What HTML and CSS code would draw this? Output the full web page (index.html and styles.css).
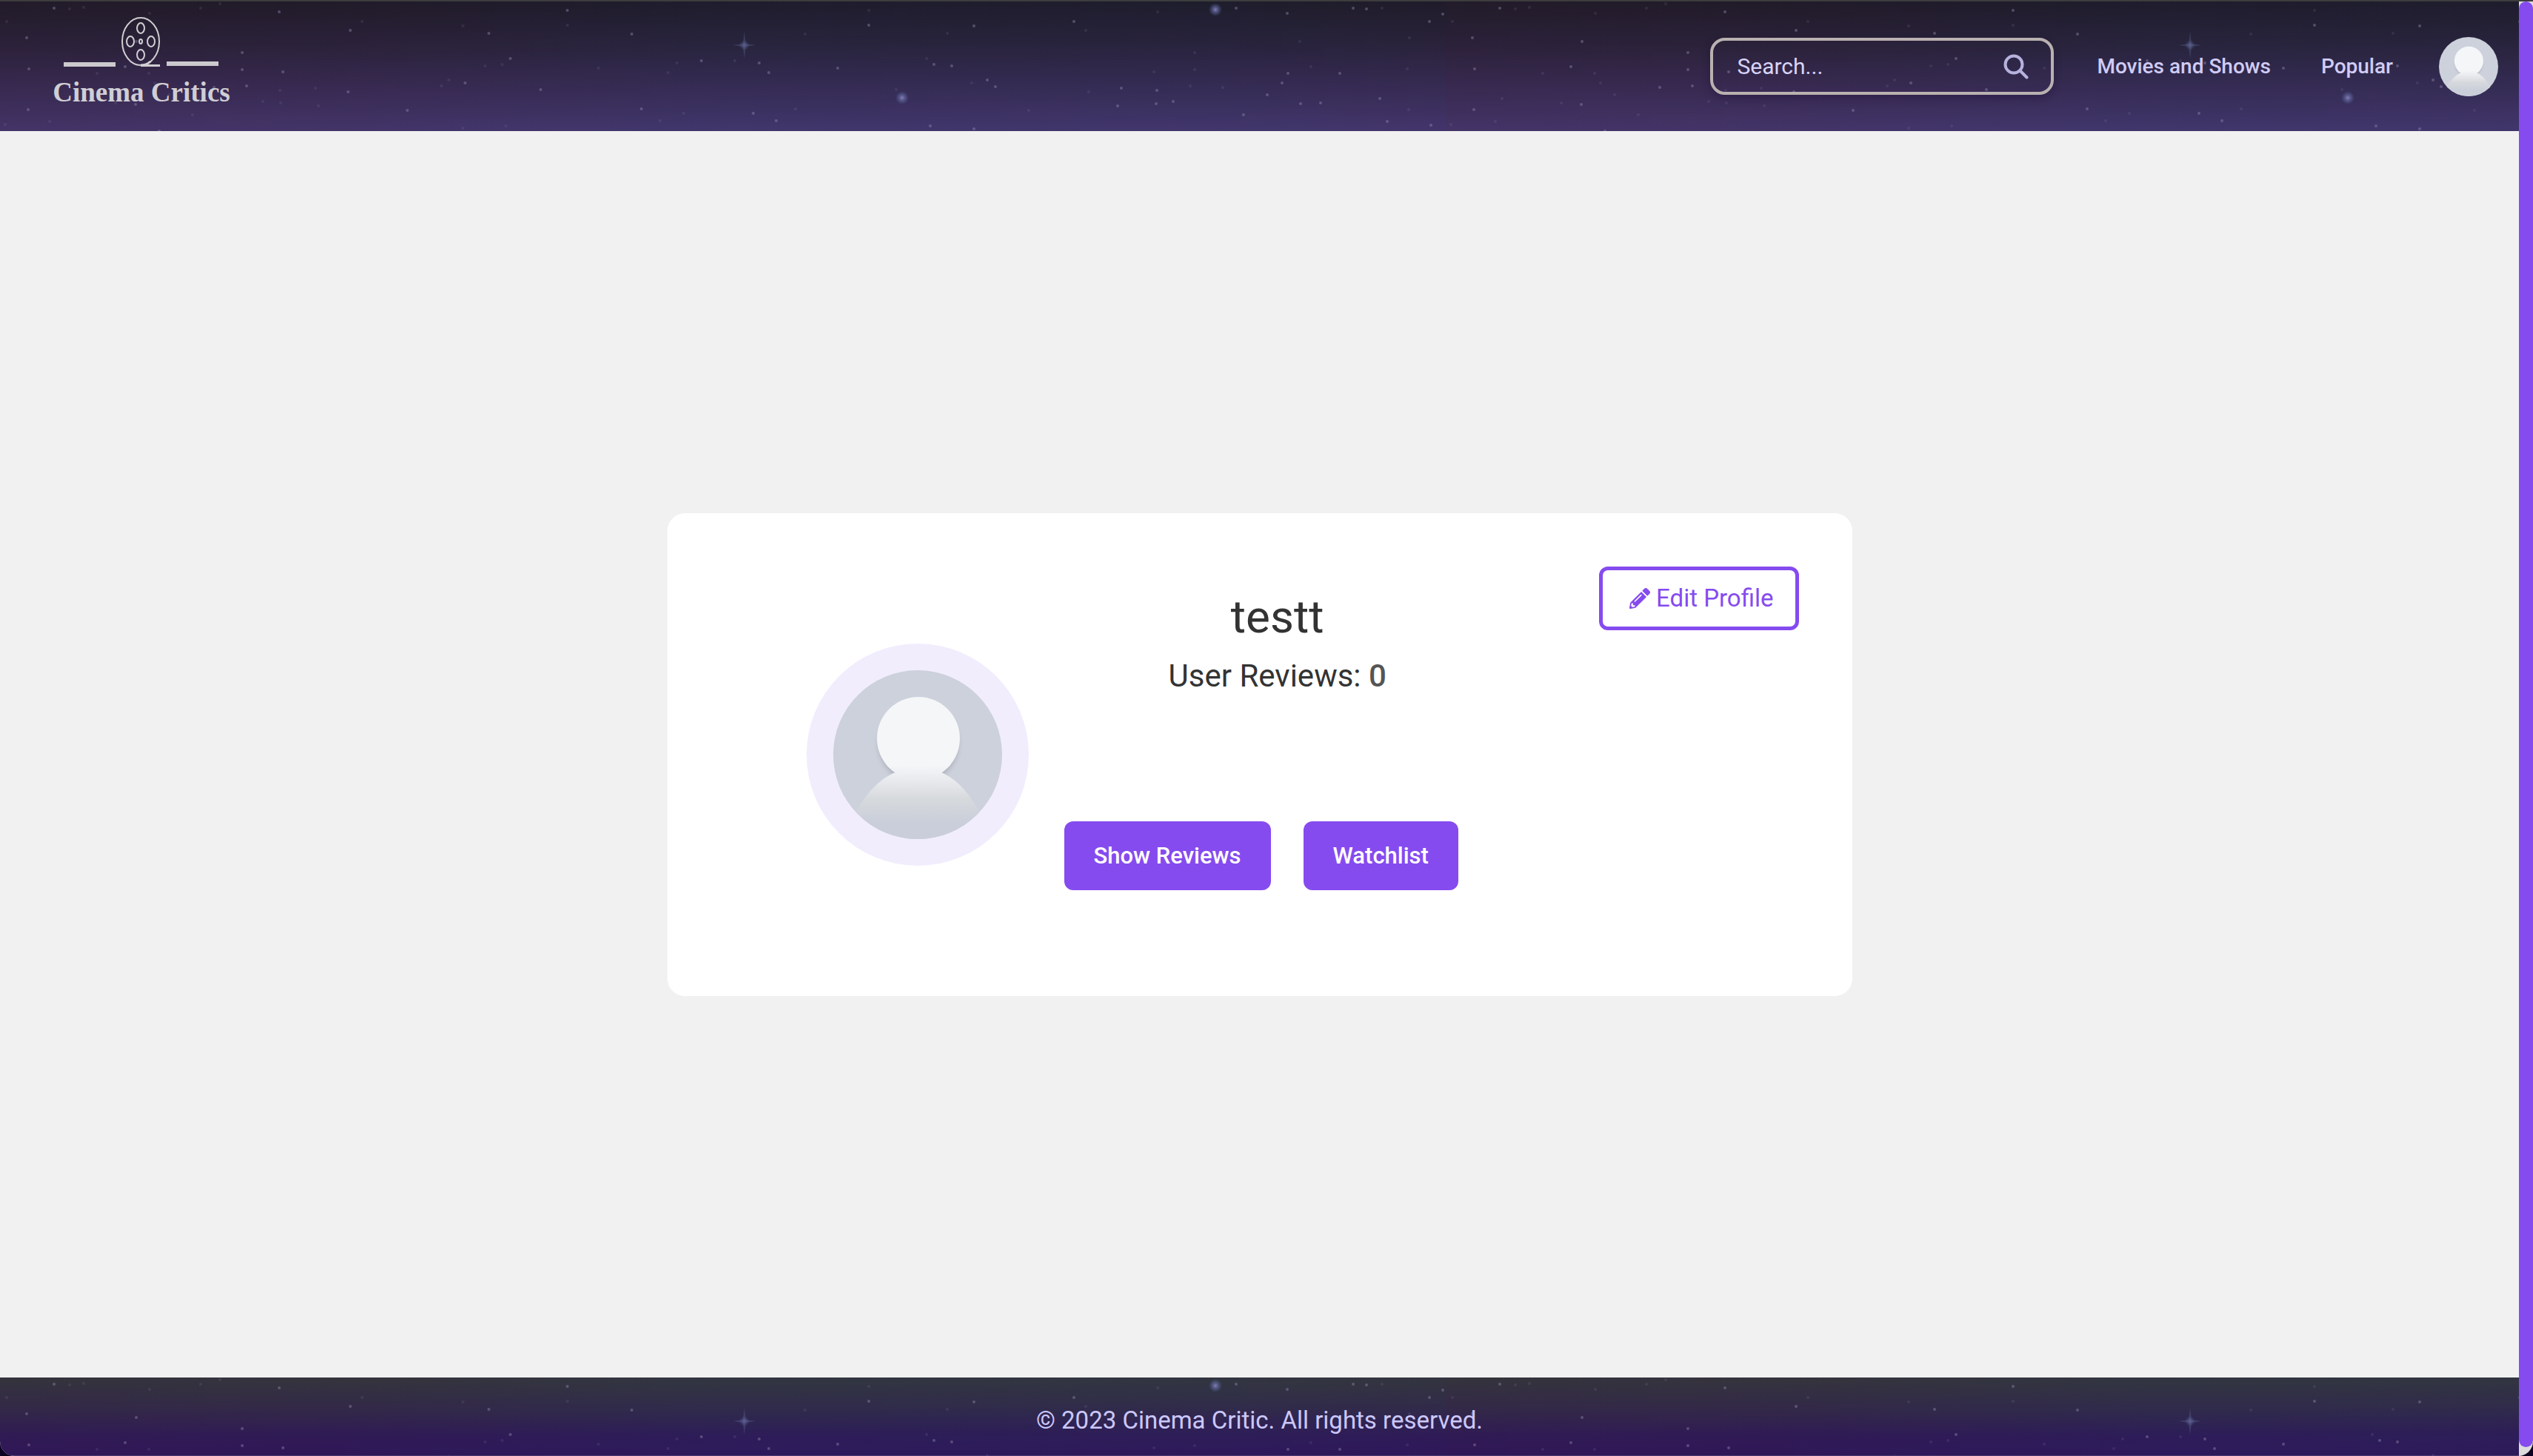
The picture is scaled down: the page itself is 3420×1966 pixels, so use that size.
FILE: index.html
```html
<!DOCTYPE html>
<html lang="en">
<head>
<meta charset="utf-8">
<title>Cinema Critics</title>
<link rel="stylesheet" href="styles.css">
</head>
<body>
<div class="window">
  <div class="page">
    <header class="header">
      <svg class="sky" aria-hidden="true">
        <defs>
          <radialGradient id="glow">
            <stop offset="0" stop-color="#8d84b4" stop-opacity=".95"/>
            <stop offset=".35" stop-color="#6d6ca8" stop-opacity=".7"/>
            <stop offset="1" stop-color="#4a6a98" stop-opacity="0"/>
          </radialGradient>
          <linearGradient id="tint">
            <stop offset="0" stop-color="#4a1828" stop-opacity=".08"/>
            <stop offset=".25" stop-color="#4a1828" stop-opacity=".06"/>
            <stop offset=".5" stop-color="#203c60" stop-opacity=".06"/>
            <stop offset=".85" stop-color="#203c60" stop-opacity=".05"/>
            <stop offset="1" stop-color="#402848" stop-opacity=".03"/>
          </linearGradient>
          <pattern id="stars" width="1952" height="1200" patternUnits="userSpaceOnUse">
            <rect width="1952" height="1200" fill="url(#tint)"/>
            <path class="star-faint" d="M94 10h0M113 8h0M297 3h0M271 9h0M9 27h0M202 16h0M489 27h0M625 33h0M766 32h0M1087 44h0M678 85h0M655 87h0M914 83h0M992 80h0M808 90h0M902 96h0M131 97h0M201 97h0M606 106h0M596 114h0M378 120h0M426 117h0M355 135h0M379 137h0M430 141h0M67 162h0M7 166h0M260 153h0M625 171h0M683 168h0M923 151h0M891 161h0M1074 145h0M1173 12h0M1279 43h0M1466 39h0M1563 14h0M1866 9h0M1903 49h0M1755 54h0M1613 69h0M1613 92h0M1558 95h0M1251 77h0M1312 110h0M1210 119h0M1389 147h0M1470 122h0M1607 114h0M1651 116h0M1770 88h0M1900 91h0M1902 146h0M209 110h0M228 126h0M156 137h0M76 131h0"/>
            <path class="star-bright" d="M73 9h0M377 14h0M766 12h0M473 39h0M660 43h0M853 44h0M36 49h0M184 54h0M327 69h0M689 77h0M947 80h0M1025 83h0M1038 96h0M1131 90h0M39 91h0M169 88h0M327 92h0M382 95h0M333 114h0M628 110h0M730 119h0M470 122h0M550 147h0M38 146h0M183 139h0M215 175h0M866 145h0M1017 151h0M1048 161h0M1173 32h0M1315 33h0M1450 27h0M1669 9h0M1738 16h0M1827 9h0M1845 10h0M1948 17h0M1930 27h0M1261 85h0M1285 87h0M1333 106h0M1344 115h0M1514 117h0M1562 120h0M1509 141h0M1561 138h0M1584 135h0M1679 153h0M1711 126h0M1731 110h0M1739 97h0M1809 97h0M1756 138h0M1783 137h0M1863 131h0M1873 162h0M1932 167h0M1256 168h0M1315 172h0M289 116h0"/>
            <circle cx="1218" cy="130" r="9" fill="url(#glow)"/>
            <circle cx="1641" cy="11" r="9" fill="url(#glow)"/>
            <circle cx="1005" cy="59" r="7" fill="url(#glow)" fill-opacity=".6"/>
            <path fill="#65709c" fill-opacity=".3" d="M1005 41l2 16 13 2-13 2-2 16-2-16-13-2 13-2z"/>
          </pattern>
        </defs>
        <rect width="100%" height="100%" fill="url(#stars)"/>
      </svg>
      <a class="logo" href="#" aria-label="Cinema Critics">
        <svg viewBox="0 0 240 137" width="240" height="137">
          <g fill="none" stroke="#d0ced2" stroke-width="2">
            <ellipse cx="119" cy="35" rx="25" ry="32"/>
            <ellipse cx="119" cy="17" rx="5" ry="7"/>
            <ellipse cx="119" cy="53" rx="5" ry="7"/>
            <ellipse cx="105" cy="35" rx="5" ry="7"/>
            <ellipse cx="133" cy="35" rx="5" ry="7"/>
            <ellipse cx="119" cy="35" rx="2" ry="3"/>
            <path d="M119 67.500h26M119 67q8 0 13-5" stroke-width="3"/>
          </g>
          <path fill="#cccacd" d="M15 63h70v6H15zM154 62h70v6h-70z"/>
          <text class="logo-text" x="120" y="116" text-anchor="middle">Cinema Critics</text>
        </svg>
      </a>
      <form class="search">
        <input class="search-input" type="text" placeholder="Search..." aria-label="Search">
        <button class="search-button" type="button" aria-label="Submit search">
          <svg viewBox="0 0 34 34" width="34" height="34" fill="none" stroke="#b7b2dd" stroke-width="4" stroke-linecap="round"><circle cx="14" cy="14" r="11.500"/><path d="M22.500 22.500l9 9"/></svg>
        </button>
      </form>
      <nav class="nav">
        <a class="nav-link" href="#">Movies and Shows</a>
        <a class="nav-link" href="#">Popular</a>
      </nav>
      <a class="account" href="#" aria-label="Profile">
        <svg class="portrait" viewBox="0 0 228 228">
          <defs>
            <linearGradient id="body" gradientUnits="userSpaceOnUse" x1="0" y1="128" x2="0" y2="206">
              <stop offset="0" stop-color="#f4f6f8"/>
              <stop offset=".3" stop-color="#e7e8ec"/>
              <stop offset=".6" stop-color="#d6d9dc"/>
              <stop offset="1" stop-color="#caceda"/>
            </linearGradient>
            <radialGradient id="shade">
              <stop offset=".8" stop-color="#a3a7b3" stop-opacity=".85"/>
              <stop offset="1" stop-color="#ccd1dc" stop-opacity="0"/>
            </radialGradient>
            <clipPath id="round"><circle cx="114" cy="114" r="114"/></clipPath>
            <clipPath id="neck"><circle cx="115" cy="92" r="56"/></clipPath>
          </defs>
          <g clip-path="url(#round)">
            <rect width="228" height="228" fill="#ccd1dc"/>
            <circle cx="115" cy="99" r="62" fill="url(#shade)"/>
            <path fill="url(#body)" d="M26 200C46 160 70 143 84 138L115 122 146 138C166 147 184 164 202 200V228H26z"/>
            <circle cx="115" cy="92" r="56" fill="#f4f6f8"/>
            <path fill="url(#body)" d="M72 128H158V148H72z" clip-path="url(#neck)"/>
          </g>
        </svg>
      </a>
    </header>

    <main class="main">
      <section class="card">
        <div class="avatar"><svg class="portrait" viewBox="0 0 228 228" aria-hidden="true">
          <g clip-path="url(#round)">
            <rect width="228" height="228" fill="#ccd1dc"/>
            <circle cx="115" cy="99" r="62" fill="url(#shade)"/>
            <path fill="url(#body)" d="M26 200C46 160 70 143 84 138L115 122 146 138C166 147 184 164 202 200V228H26z"/>
            <circle cx="115" cy="92" r="56" fill="#f4f6f8"/>
            <path fill="url(#body)" d="M72 128H158V148H72z" clip-path="url(#neck)"/>
          </g>
        </svg></div>
        <div class="info">
          <h1 class="name">testt</h1>
          <p class="reviews">User Reviews: <span class="count">0</span></p>
          <div class="actions">
            <button class="button" type="button">Show Reviews</button>
            <button class="button" type="button">Watchlist</button>
          </div>
        </div>
        <button class="edit" type="button">
          <svg viewBox="0 0 512 512" width="28" height="28" fill="currentColor"><path d="M498 142l-46 46c-5 5-12 5-17 0L324 77c-5-5-5-12 0-17l46-46c19-19 49-19 68 0l60 60c19 19 19 49 0 68zm-214-42L22 362 0 484c-3 16 12 30 28 28l122-22 262-262c5-5 5-12 0-17L301 100c-4-5-12-5-17 0zM124 340c-5-5-5-14 0-20l154-154c6-5 15-5 20 0s5 14 0 20L144 340c-6 5-15 5-20 0zm-36 84h48v36l-65 12-31-31 12-65h36v48z"/></svg>
          Edit Profile
        </button>
      </section>
    </main>

    <footer class="footer">
      <svg class="sky" aria-hidden="true"><rect width="100%" height="100%" fill="url(#stars)"/></svg>
      <p class="copyright">© 2023 Cinema Critic. All rights reserved.</p>
    </footer>
  </div>
  <div class="scrollbar"><div class="thumb"></div></div>
</div>
</body>
</html>
```
FILE: styles.css
```css
* { box-sizing: border-box; }

body {
  margin: 0;
  background: #0d0322;
  font-family: Roboto, "Liberation Sans", sans-serif;
  font-weight: 400;
}

h1, p { margin: 0; font-weight: inherit; }
a { color: inherit; text-decoration: none; }
button, input { font: inherit; }
svg { display: block; }

.window {
  display: flex;
  min-height: 100vh;
  border-top: 2px solid #3d3c3d;
  border-radius: 0 0 20px 20px;
  overflow: hidden;
}

.page {
  flex: 1;
  display: flex;
  flex-direction: column;
  background: #f1f1f1;
}

.sky {
  position: absolute;
  inset: 0;
  width: 100%;
  height: 100%;
  z-index: -1;
}

.star-faint, .star-bright {
  fill: none;
  stroke: #8f86ac;
  stroke-linecap: round;
}
.star-faint { stroke-width: 4px; stroke-opacity: .15; }
.star-bright { stroke-width: 4px; stroke-opacity: .45; }

/* header */
.header {
  position: relative;
  isolation: isolate;
  display: flex;
  align-items: center;
  min-height: 175px;
  padding: 0 28px 0 71px;
  background: linear-gradient(#1e1b29, #28223a 32%, #34294f 60%, #43366d);
  color: #d0ccf5;
}

.logo { margin-right: auto; }
.logo-text {
  font: bold 37px "Liberation Serif", serif;
  fill: #d0ced4;
}

.search {
  display: flex;
  align-items: center;
  width: 464px;
  height: 77px;
  padding: 0 30px 0 32px;
  border: 4px solid #b9b1b0;
  border-radius: 20px;
  box-shadow: 0 4px 12px rgba(20, 10, 40, .3);
}
.search-input {
  flex: 1;
  min-width: 0;
  padding: 0;
  border: 0;
  outline: 0;
  background: none;
  color: inherit;
  font-size: 30px;
}
.search-input::placeholder { color: #d8d4f8; opacity: 1; }
.search-button { padding: 0; border: 0; background: none; }

.nav {
  display: flex;
  gap: 68px;
  margin: 0 62px 0 58px;
  font-size: 28px;
  font-weight: 500;
}

.account { width: 80px; }
.portrait { width: 100%; }

/* profile card */
.main {
  flex: 1;
  display: grid;
  place-items: center;
}

.card {
  display: flex;
  align-items: center;
  width: 1600px;
  max-width: 100%;
  min-height: 652px;
  padding: 72px;
  border-radius: 24px;
  background: #fff;
  color: #333;
}

.avatar {
  width: 300px;
  margin-left: 116px;
  padding: 36px;
  border-radius: 50%;
  background: #f1edfd;
}

.info {
  align-self: flex-start;
  margin-left: 48px;
  padding-top: 32px;
  text-align: center;
}
.name { font-size: 62px; line-height: 72px; }
.reviews { margin-top: 20px; font-size: 42px; line-height: 48px; }
.count { color: #555; font-weight: 500; }

.actions { display: flex; margin-top: 172px; }
.button {
  height: 93px;
  margin-right: 44px;
  padding: 0 40px;
  border: 0;
  border-radius: 12px;
  background: #854bef;
  color: #fff;
  font-size: 31px;
  font-weight: 500;
}

.edit {
  display: flex;
  align-items: center;
  align-self: flex-start;
  gap: 8px;
  height: 86px;
  margin-left: auto;
  padding: 0 29px 0 36px;
  border: 5px solid #854bef;
  border-radius: 12px;
  background: #fff;
  color: #854bef;
  font-size: 33px;
}

/* footer */
.footer {
  position: relative;
  isolation: isolate;
  display: grid;
  place-items: center;
  min-height: 106px;
  padding-top: 10px;
  border-bottom: 1px solid #4a3a70;
  background: linear-gradient(#33363e, #312a4a 40%, #2e1b58 75%, #2e175b);
  color: #ccc8fa;
}
.copyright { font-size: 33px; line-height: 40px; }

/* scrollbar track and thumb */
.scrollbar {
  display: flex;
  width: 19px;
  padding-bottom: 12px;
  background: #dcdcdc;
}
.thumb { flex: 1; border-radius: 10px; background: #854bef; }
```
